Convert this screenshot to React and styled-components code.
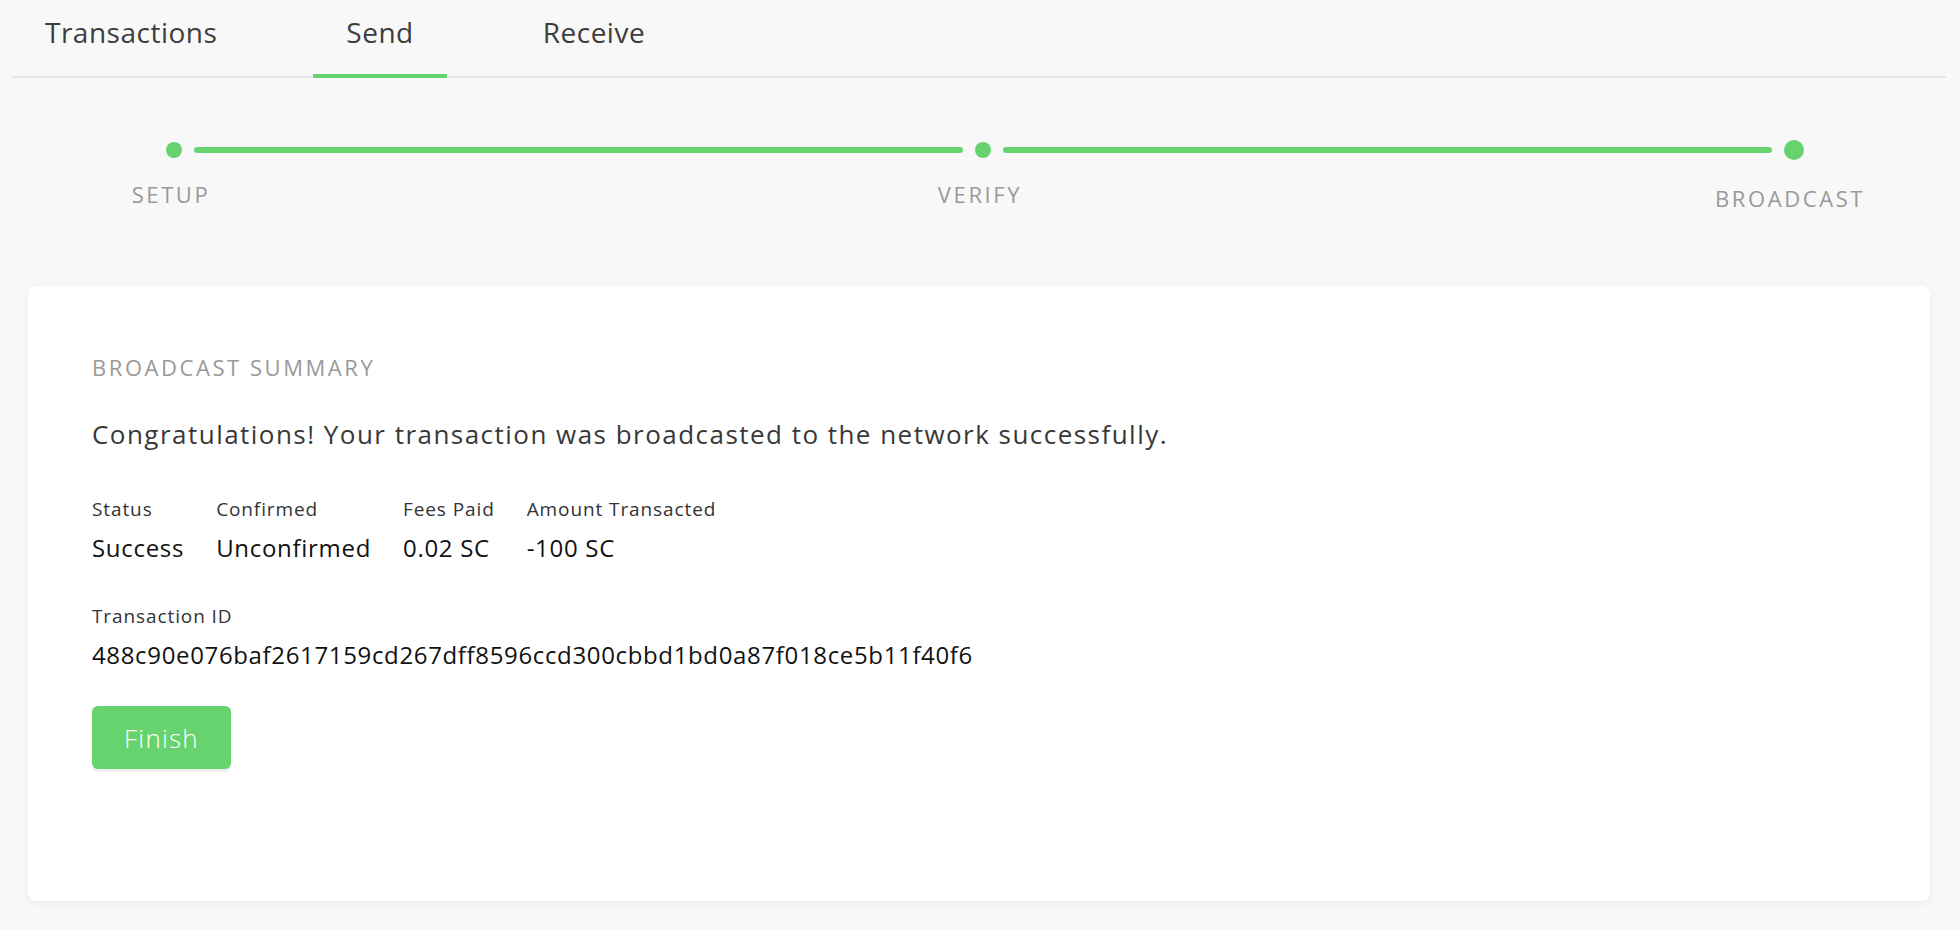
import React from "react";
import styled, { createGlobalStyle } from "styled-components";

const GREEN = "#66d36e";

const Global = createGlobalStyle`
  html, body { margin: 0; padding: 0; background: #f8f8f8; }
  body { font-family: "Open Sans", "Liberation Sans", sans-serif; color: #333; }
  * { box-sizing: border-box; }
`;

const Page = styled.div`
  min-height: 930px;
  background: #f8f8f8;
  padding-bottom: 31px;
`;

const TabBar = styled.nav`
  display: flex;
  gap: 63px;
  margin: 0 14px 0 12px;
  border-bottom: 2px solid #e6e6e6;
`;

const Tab = styled.div`
  padding: 14px 33px 24px;
  margin-bottom: -2px;
  font-size: 28px;
  line-height: 36px;
  letter-spacing: 0.5px;
  color: #3d3d3d;
  border-bottom: 4px solid ${(p) => (p.$active ? GREEN : "transparent")};
`;

const Stepper = styled.div`
  display: flex;
  align-items: flex-start;
  margin-top: 62px;
  padding: 0 156px 0 166px;
`;

const Step = styled.div`
  display: flex;
  flex-direction: column;
  align-items: center;
  width: ${(p) => p.$size}px;
  padding-top: ${(p) => (20 - p.$size) / 2}px;
`;

const Dot = styled.div`
  width: ${(p) => p.$size}px;
  height: ${(p) => p.$size}px;
  border-radius: 50%;
  background: ${GREEN};
  flex-shrink: 0;
`;

const StepLabel = styled.div`
  margin-top: ${(p) => (p.$big ? 26 : 24)}px;
  margin-right: ${(p) => (p.$big ? 8 : 6)}px;
  font-size: 22px;
  line-height: 24px;
  letter-spacing: 2.6px;
  color: #999;
  white-space: nowrap;
`;

const Connector = styled.div`
  flex: 1;
  height: 6px;
  margin: 7px 12px 0;
  border-radius: 3px;
  background: ${GREEN};
`;

const Card = styled.section`
  margin: 76px 30px 0 28px;
  background: #fff;
  border-radius: 8px;
  box-shadow: 0 2px 10px rgba(0, 0, 0, 0.05);
  padding: 69px 64px 132px;
`;

const SectionTitle = styled.h2`
  margin: 0;
  font-size: 22px;
  font-weight: 400;
  line-height: 24px;
  letter-spacing: 2.55px;
  color: #999;
`;

const Message = styled.p`
  margin: 39px 0 0;
  font-size: 26px;
  line-height: 32px;
  letter-spacing: 1.47px;
  color: #383838;
`;

const Stats = styled.div`
  display: flex;
  gap: 32px;
  margin-top: 47px;
`;

const Field = styled.div`
  display: flex;
  flex-direction: column;
  margin-top: ${(p) => p.$mt || 0}px;
`;

const Label = styled.div`
  font-size: 19px;
  line-height: 24px;
  letter-spacing: 0.9px;
  color: #333;
`;

const Value = styled.div`
  margin-top: 12px;
  font-size: 24px;
  line-height: 30px;
  letter-spacing: 0.7px;
  color: #111;
`;

const Hash = styled(Value)`
  letter-spacing: 0.65px;
`;

const FinishButton = styled.button`
  margin-top: 36px;
  width: 139px;
  height: 63px;
  border: none;
  border-radius: 6px;
  background: ${GREEN};
  color: #fff;
  font-family: "Open Sans", "Liberation Sans", sans-serif;
  font-size: 26px;
  font-weight: 300;
  letter-spacing: 1.2px;
  box-shadow: 0 3px 3px rgba(0, 0, 0, 0.08);
  cursor: pointer;
`;

const steps = [
  { label: "SETUP", size: 16 },
  { label: "VERIFY", size: 16 },
  { label: "BROADCAST", size: 20 },
];

const stats = [
  ["Status", "Success"],
  ["Confirmed", "Unconfirmed"],
  ["Fees Paid", "0.02 SC"],
  ["Amount Transacted", "-100 SC"],
];

export default function App() {
  return (
    <Page>
      <Global />
      <TabBar>
        <Tab>Transactions</Tab>
        <Tab $active>Send</Tab>
        <Tab>Receive</Tab>
      </TabBar>

      <Stepper>
        {steps.map((s, i) => (
          <React.Fragment key={s.label}>
            {i > 0 && <Connector />}
            <Step $size={s.size}>
              <Dot $size={s.size} />
              <StepLabel $big={s.size > 16}>{s.label}</StepLabel>
            </Step>
          </React.Fragment>
        ))}
      </Stepper>

      <Card>
        <SectionTitle>BROADCAST SUMMARY</SectionTitle>
        <Message>
          Congratulations! Your transaction was broadcasted to the network successfully.
        </Message>
        <Stats>
          {stats.map(([l, v]) => (
            <Field key={l}>
              <Label>{l}</Label>
              <Value>{v}</Value>
            </Field>
          ))}
        </Stats>
        <Field $mt={41}>
          <Label>Transaction ID</Label>
          <Hash>488c90e076baf2617159cd267dff8596ccd300cbbd1bd0a87f018ce5b11f40f6</Hash>
        </Field>
        <FinishButton>Finish</FinishButton>
      </Card>
    </Page>
  );
}
